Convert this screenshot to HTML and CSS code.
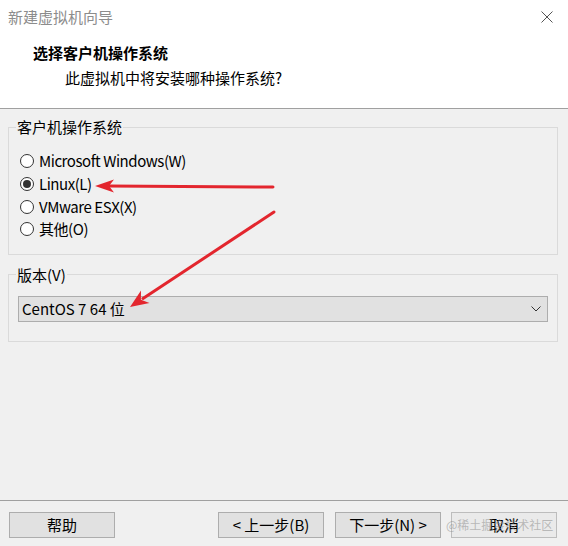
FILE: index.html
```html
<!DOCTYPE html>
<html lang="zh-CN">
<head>
<meta charset="utf-8">
<title>新建虚拟机向导</title>
<link rel="stylesheet" href="styles.css">
</head>
<body>
<div class="dialog">
  <header class="header">
    <div class="titlebar">
      <span class="title">新建虚拟机向导</span>
      <svg class="close" width="12" height="12" viewBox="0 0 12 12"><path d="M0.5 0.5L11.5 11.5M11.5 0.5L0.5 11.5" stroke="#555" stroke-width="1"/></svg>
    </div>
    <div class="heading">选择客户机操作系统</div>
    <div class="subheading">此虚拟机中将安装哪种操作系统?</div>
  </header>

  <main class="content">
    <fieldset class="group group-os">
      <legend>客户机操作系统</legend>
      <div class="group-body os-list">
        <div class="radio"><span class="dot"></span><span class="label">Microsoft Windows(W)</span></div>
        <div class="radio"><span class="dot checked"></span><span class="label">Linux(L)</span></div>
        <div class="radio"><span class="dot"></span><span class="label">VMware ESX(X)</span></div>
        <div class="radio"><span class="dot"></span><span class="label">其他(O)</span></div>
      </div>
    </fieldset>

    <fieldset class="group group-version">
      <legend>版本(V)</legend>
      <div class="group-body version-body">
        <div class="combo">
          <span>CentOS 7 64 位</span>
          <svg class="chev" width="10" height="6" viewBox="0 0 10 6"><path d="M0.5 0.5L5 5L9.5 0.5" fill="none" stroke="#333" stroke-width="1"/></svg>
        </div>
      </div>
    </fieldset>
  </main>

  <footer class="footer">
    <button class="btn">帮助</button>
    <span class="spacer"></span>
    <button class="btn">&lt; 上一步(B)</button>
    <button class="btn btn-next">下一步(N) &gt;</button>
    <button class="btn btn-cancel">取消</button>
  </footer>

  <div class="watermark">@稀土掘金技术社区</div>

  <svg class="arrows" width="568" height="546" viewBox="0 0 568 546">
    <line x1="273" y1="187" x2="108" y2="186" stroke="#e3262e" stroke-width="3" stroke-linecap="round"/>
    <polygon points="95,186 114,179.5 109,186 114,192.5" fill="#e3262e"/>
    <line x1="274" y1="212" x2="143" y2="298.5" stroke="#e3262e" stroke-width="3" stroke-linecap="round"/>
    <polygon points="130,307 141,290.5 140.9,299.8 149.5,303" fill="#e3262e"/>
  </svg>
</div>
</body>
</html>
```

FILE: styles.css
```css
* { box-sizing: border-box; }
html, body { margin: 0; padding: 0; }
body {
  width: 568px;
  height: 546px;
  overflow: hidden;
  background: #f0f0f0;
  font-family: "Noto Sans CJK SC", "Noto Sans", sans-serif;
  font-size: 15px;
  color: #000;
}
.dialog {
  position: relative;
  width: 568px;
  height: 546px;
  display: flex;
  flex-direction: column;
}
.header {
  background: #fff;
  height: 109px;
  border-bottom: 1px solid #a0a0a0;
}
.titlebar {
  height: 34px;
  display: flex;
  align-items: center;
  justify-content: space-between;
  padding: 0 15px 0 8px;
}
.title {
  color: #8c8c8c;
  font-size: 15px;
  line-height: 20px;
}
.close { display: block; }
.heading {
  margin-top: 9px;
  padding-left: 33px;
  font-weight: bold;
  font-size: 15px;
  line-height: 20px;
}
.subheading {
  margin-top: 5px;
  padding-left: 65px;
  font-size: 15px;
  line-height: 20px;
}
.content {
  padding: 8px 10px 0 8px;
}
.group {
  margin: 0;
  border: 1px solid #dadada;
  padding: 0;
  min-width: 0;
}
.group legend {
  margin-left: 7px;
  padding: 0 1px;
  line-height: 20px;
  font-size: 15px;
}
.os-list {
  padding: 13px 0 13px 11px;
}
.radio {
  display: flex;
  align-items: center;
  height: 22.7px;
  gap: 5px;
  line-height: 20px;
}
.label { letter-spacing: -0.45px; }
.dot {
  width: 14px;
  height: 14px;
  border: 1px solid #333;
  border-radius: 50%;
  background: #fff;
  display: flex;
  align-items: center;
  justify-content: center;
  flex: none;
}
.dot.checked::after {
  content: "";
  width: 8px;
  height: 8px;
  border-radius: 50%;
  background: #333;
}
.group-version {
  margin-top: 10px;
}
.version-body {
  padding: 11px 9px 19px 9px;
}
.combo {
  height: 26px;
  background: #e1e1e1;
  border: 1px solid #adadad;
  display: flex;
  align-items: center;
  justify-content: space-between;
  padding: 0 6px 0 3px;
  line-height: 20px;
}
.chev { display: block; }
.footer {
  margin-top: auto;
  border-top: 1px solid #a0a0a0;
  display: flex;
  align-items: center;
  padding: 11px 11px 8px 9px;
  height: 46px;
}
.spacer { flex: 1; }
.btn {
  width: 106px;
  height: 26px;
  background: #e1e1e1;
  border: 1px solid #adadad;
  font-family: inherit;
  font-size: 15px;
  color: #000;
  padding: 0;
  line-height: 20px;
}
.btn-next { margin-left: 11px; }
.btn-cancel { margin-left: 10px; background: #eaeaea; border-color: #bdbdbd; }
.watermark {
  position: absolute;
  left: 446px;
  top: 515px;
  font-size: 12px;
  line-height: 20px;
  white-space: nowrap;
  color: rgba(140, 140, 140, 0.55);
  pointer-events: none;
}
.arrows {
  position: absolute;
  left: 0;
  top: 0;
  pointer-events: none;
}
```
